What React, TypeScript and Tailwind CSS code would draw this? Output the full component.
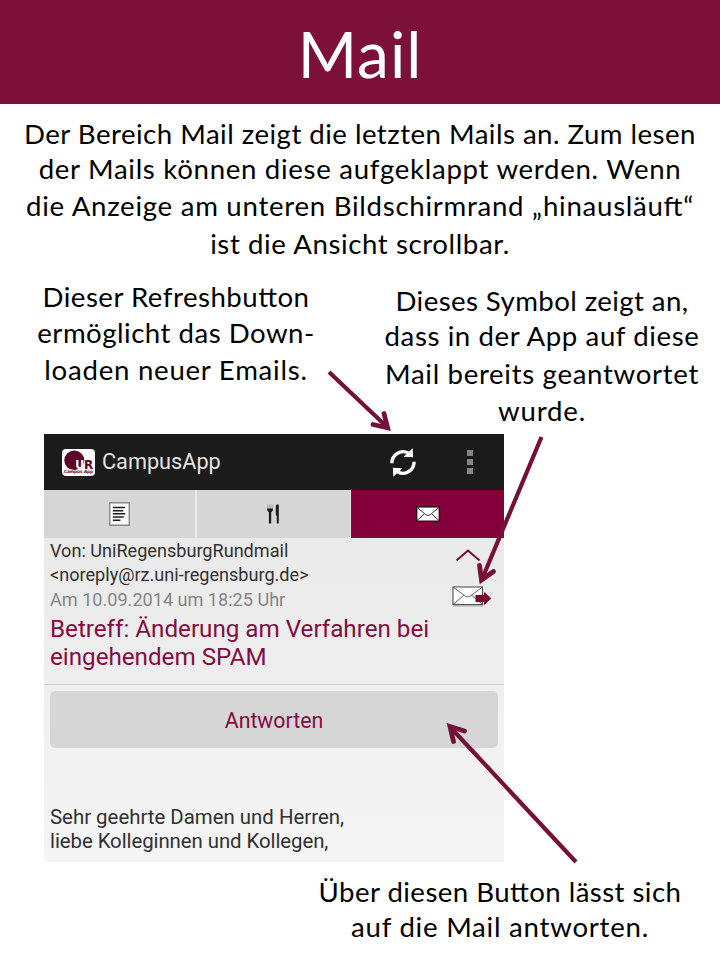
import type { ReactNode } from "react";

const slide = "font-['Lato','Liberation_Sans',sans-serif] text-[27.6px] text-black [font-feature-settings:'liga'_1]";
const droid = "font-['Roboto','Liberation_Sans',sans-serif]";

function Line({ children, className = "" }: { children: ReactNode; className?: string }) {
  return (
    <div className={`flex h-9 justify-center whitespace-nowrap leading-9 ${className}`}>
      <span>{children}</span>
    </div>
  );
}

function Logo() {
  return (
    <svg className="h-[27px] w-[33px]" viewBox="0 0 33 27">
      <rect width="33" height="27" rx="4" fill="#fdfdfd" />
      <ellipse cx="12.3" cy="11.3" rx="10" ry="9.7" fill="#5e0428" />
      <text x="13.2" y="20.4" fontFamily="DejaVu Sans" fontWeight="bold" fontSize="13" textLength="9" lengthAdjust="spacingAndGlyphs" fill="#fff">U</text>
      <text x="22" y="20.4" fontFamily="DejaVu Sans" fontWeight="bold" fontSize="13" textLength="9.2" lengthAdjust="spacingAndGlyphs" fill="#5e0428">R</text>
      <text x="2" y="24" fontFamily="DejaVu Sans" fontWeight="bold" fontSize="4.4" textLength="29" lengthAdjust="spacingAndGlyphs" fill="#5e0428">Campus App</text>
    </svg>
  );
}

function RefreshIcon() {
  return (
    <svg className="h-[29px] w-[26px]" viewBox="0 0 26 29" fill="none">
      <g>
        <path d="M1.9 15.2A11.2 11.4 0 0 1 18.2 5" stroke="#fff" strokeWidth="3.4" />
        <path d="M22.7 0.2L23.1 9.2L13.5 8.8Z" fill="#fff" />
      </g>
      <g transform="rotate(180 13 14.5)">
        <path d="M1.9 15.2A11.2 11.4 0 0 1 18.2 5" stroke="#fff" strokeWidth="3.4" />
        <path d="M22.7 0.2L23.1 9.2L13.5 8.8Z" fill="#fff" />
      </g>
    </svg>
  );
}

function NewsIcon() {
  return (
    <svg className="h-6 w-[21px]" viewBox="0 0 22 24" preserveAspectRatio="none">
      <rect x="0.8" y="0.8" width="20.4" height="22.4" fill="#fcfcfc" stroke="#7b857f" strokeWidth="1.4" />
      <path d="M4 5.6H17M4 8.7H15M4 11.8H17M4 14.9H15.5M4 18.2H12" stroke="#1c1c1c" strokeWidth="1.5" />
    </svg>
  );
}

function CutleryIcon() {
  return (
    <svg className="h-5 w-[13px]" viewBox="0 0 13 20">
      <path d="M0.8 0.5V5M3 0.5V5M5.2 0.5V5" stroke="#a9a9a9" strokeWidth="1.3" />
      <path d="M0.2 4.6H5.9V6.6L4.2 8.2V19.4H1.9V8.2L0.2 6.6Z" fill="#1c1c1c" />
      <path d="M8.8 1.8Q9 0.4 10.6 0.4H11.8V19.4H9.8V12L8.8 11Z" fill="#1c1c1c" />
    </svg>
  );
}

function MailIcon() {
  return (
    <svg className="h-4 w-6" viewBox="0 0 24 16">
      <rect x="0.7" y="0.9" width="22.6" height="14.3" fill="#fff" stroke="#26101a" strokeWidth="1.4" />
      <path d="M1 1.3L9.6 8.6Q12 10.4 14.4 8.6L23 1.3M1 14.8L8.3 7.8M23 14.8L15.7 7.8" fill="none" stroke="#333" strokeWidth="1" />
    </svg>
  );
}

function RepliedIcon() {
  return (
    <svg className="h-6 w-10" viewBox="0 0 40 24">
      <rect x="1.2" y="3" width="30" height="17.6" fill="#000" opacity="0.22" />
      <rect x="1" y="1" width="29.5" height="17.5" fill="#fff" stroke="#505050" strokeWidth="1.1" />
      <path d="M1 1L13.5 10.3Q15.7 11.6 18 10.3L30.5 1M1 18.5L12 9.2M30.5 18.5L19.5 9.2" fill="none" stroke="#505050" strokeWidth="0.9" />
      <path d="M23.5 9H32V5.7L39.3 12.4L32 19.2V16H23.5Z" fill="#790934" />
    </svg>
  );
}

/* Arrows drawn over the slide: shaft followed by the open head. */
function Arrows() {
  return (
    <svg className="pointer-events-none absolute left-0 top-0 h-[963px] w-[720px]" viewBox="0 0 720 963" fill="none" stroke="#771039" strokeWidth="4.2">
      <path d="M329 372L386 426" />
      <path d="M384 413.5L387.6 427.8L373 424.5" strokeLinecap="round" strokeWidth="4.8" />
      <path d="M541.5 437L482.5 578" />
      <path d="M479.5 565.5L481.5 580L493.5 571.5" strokeLinecap="round" strokeWidth="4.8" />
      <path d="M576 862L451.5 728.5" />
      <path d="M464.5 731L450 726.5L453.5 741.5" strokeLinecap="round" strokeWidth="4.8" />
    </svg>
  );
}

export default function App() {
  return (
    <main className="relative h-[963px] w-[720px] overflow-hidden bg-white">
      <header className="flex h-[104px] items-center justify-center bg-[#7c1039] pt-[3px] font-['Lato','Liberation_Sans',sans-serif] text-[64px] leading-none tracking-[1px] text-white">
        <h1>Mail</h1>
      </header>

      <section className={`h-[159px] pt-3 ${slide}`}>
        <Line className="tracking-[0.48px]">Der Bereich Mail zeigt die letzten Mails an. Zum lesen</Line>
        <Line className="-mt-px tracking-[0.7px]">der Mails können diese aufgeklappt werden. Wenn</Line>
        <Line className="mt-px tracking-[0.73px]">die Anzeige am unteren Bildschirmrand „hinausläuft“</Line>
        <Line className="mt-[2px] tracking-[0.6px]">ist die Ansicht scrollbar.</Line>
      </section>

      <section className={`flex h-[171px] ${slide}`}>
        <div className="w-[352px] pt-4">
          <Line className="tracking-[0.5px]">Dieser Refreshbutton</Line>
          <Line className="tracking-[0.5px]">ermöglicht das Down-</Line>
          <Line className="mt-px tracking-[0.75px]">loaden neuer Emails.</Line>
        </div>
        <div className="ml-3 w-[356px] pt-5">
          <Line className="tracking-[0.42px]">Dieses Symbol zeigt an,</Line>
          <Line className="-mt-px tracking-[0.6px]">dass in der App auf diese</Line>
          <Line className="mt-[2px] tracking-[0.68px]">Mail bereits geantwortet</Line>
          <Line className="mt-px tracking-[0.8px]">wurde.</Line>
        </div>
      </section>

      <section className={`ml-11 flex h-[428px] w-[460px] flex-col bg-linear-to-b from-[#e6e6e6] to-[#f5f5f5] ${droid}`}>
        <div className="flex h-14 shrink-0 items-center bg-[#1b1b1b] pl-[18px]">
          <Logo />
          <span className="ml-[7px] text-[21.7px] text-[#e4e4e4]">CampusApp</span>
          <div className="ml-auto mr-[51px]">
            <RefreshIcon />
          </div>
          <div className="mr-[31px] flex flex-col gap-[3px]">
            <i className="size-1.5 bg-[#858585]" />
            <i className="size-1.5 bg-[#858585]" />
            <i className="size-1.5 bg-[#858585]" />
          </div>
        </div>
        <nav className="flex h-12 shrink-0 bg-[#d6d6d6]">
          <div className="flex w-[153px] items-center justify-center border-r-2 border-[#ebebeb]">
            <NewsIcon />
          </div>
          <div className="flex w-[154px] items-center justify-center border-r border-[#ebebeb]">
            <CutleryIcon />
          </div>
          <div className="flex w-[153px] items-center justify-center bg-[#83003a]">
            <MailIcon />
          </div>
        </nav>

        <article className="flex h-[147px] shrink-0 justify-between border-b border-[#cdcdcd] pl-[6px]">
          <div className="whitespace-nowrap pt-px text-[18.1px] leading-[24.4px] text-[#303030]">
            <p>Von: UniRegensburgRundmail</p>
            <p>&lt;noreply@rz.uni-regensburg.de&gt;</p>
            <p className="text-[#858585]">Am 10.09.2014 um 18:25 Uhr</p>
            <h2 className="mt-[3px] text-[24.2px] leading-7 text-[#850b40]">
              Betreff: Änderung am Verfahren bei
              <br />
              eingehendem SPAM
            </h2>
          </div>
          <div className="mr-3 flex w-10 flex-col">
            <svg className="ml-[3px] mt-[10px] h-[14px] w-[26px]" viewBox="0 0 26 14" fill="none" stroke="#790934" strokeWidth="2">
              <path d="M1.5 12.5L13 2.5L24.5 12.5" />
            </svg>
            <div className="mt-[24px]">
              <RepliedIcon />
            </div>
          </div>
        </article>

        <div className="px-[6px] pt-[6px]">
          <button className="h-[57px] w-full rounded-[5px] bg-[#d6d6d6] pt-[2px] text-[21.3px] text-[#850b40]">Antworten</button>
        </div>
        <div className="mt-[57px] whitespace-nowrap pl-[6px] text-[20.4px] leading-6 text-[#303030]">
          <p>Sehr geehrte Damen und Herren,</p>
          <p className="tracking-[-0.07px]">liebe Kolleginnen und Kollegen,</p>
        </div>
      </section>

      <section className={`ml-[280px] w-[440px] pt-3 ${slide}`}>
        <Line className="tracking-[0.45px]">Über diesen Button lässt sich</Line>
        <Line className="-mt-px tracking-[0.76px]">auf die Mail antworten.</Line>
      </section>

      <Arrows />
    </main>
  );
}
